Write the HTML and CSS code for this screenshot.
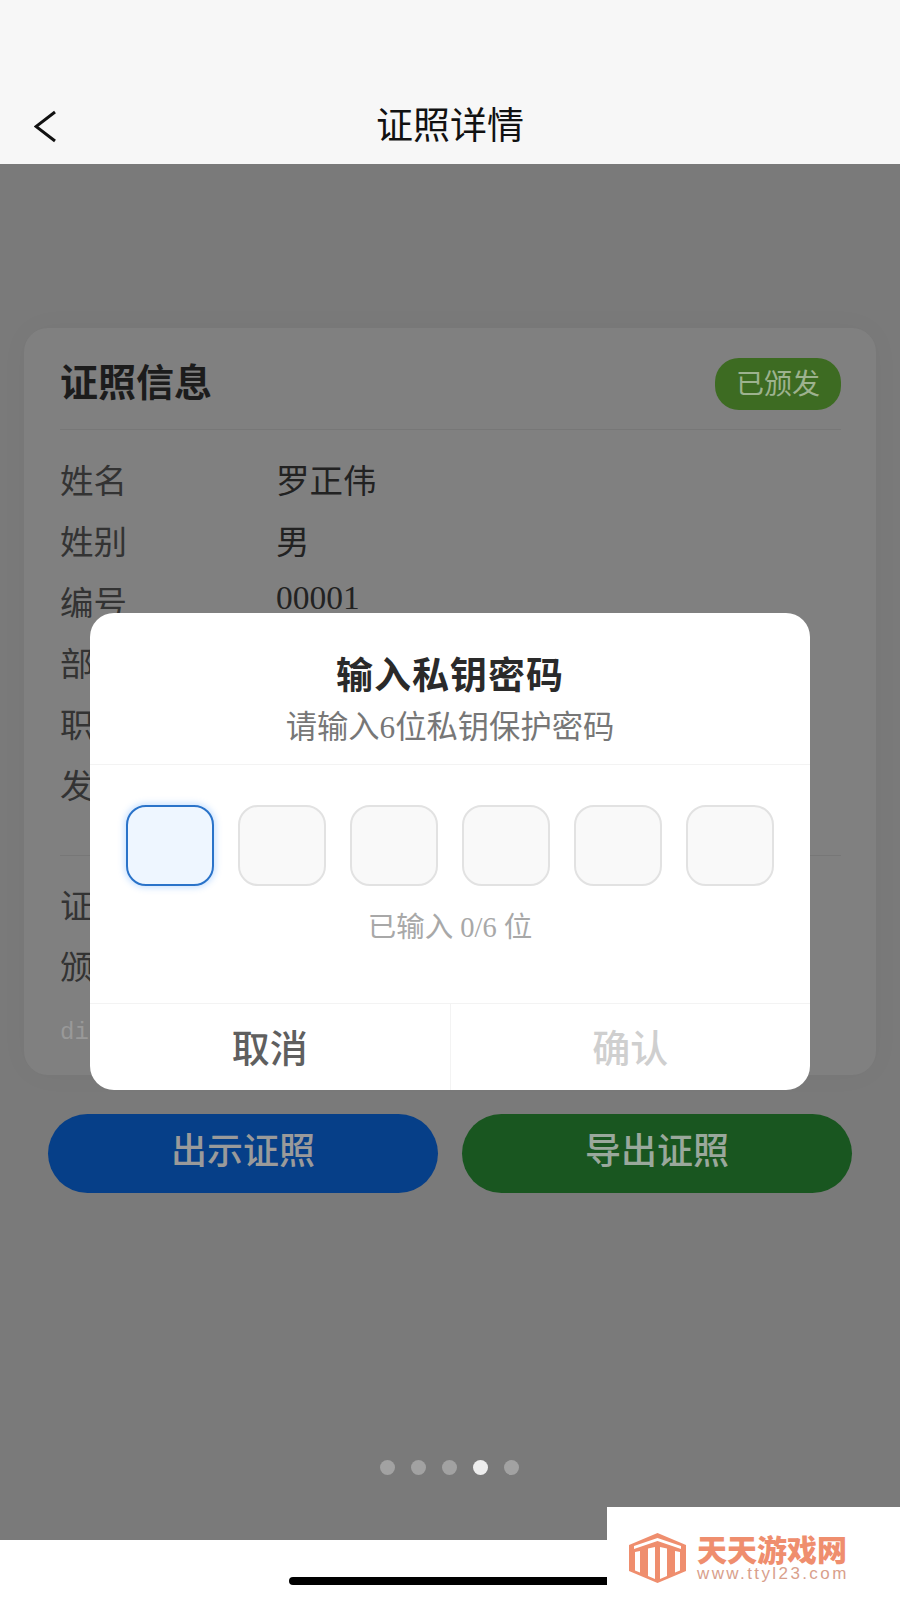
FILE: index.html
```html
<!DOCTYPE html>
<html lang="zh-CN">
<head>
    <meta charset="UTF-8">
    <meta name="viewport" content="width=device-width, initial-scale=1.0">
    <title>证照详情</title>
    <link rel="stylesheet" href="styles.css">
</head>
<body>
    <div class="app">
        <header class="nav-bar">
            <button class="back-btn" aria-label="返回">
                <svg width="24" height="34" viewBox="0 0 24 34">
                    <path d="M21 2 L2 16.5 L21 31" fill="none" stroke="#111" stroke-width="3"/>
                </svg>
            </button>
            <h1 class="nav-title">证照详情</h1>
        </header>

        <main class="page">
            <section class="cert-card">
                <div class="cert-head">
                    <h2 class="cert-title">证照信息</h2>
                    <span class="cert-badge">已颁发</span>
                </div>
                <div class="cert-rows cert-rows-main">
                    <div class="cert-row"><span class="cert-label">姓名</span><span class="cert-value">罗正伟</span></div>
                    <div class="cert-row"><span class="cert-label">姓别</span><span class="cert-value">男</span></div>
                    <div class="cert-row"><span class="cert-label">编号</span><span class="cert-value cert-num">00001</span></div>
                    <div class="cert-row"><span class="cert-label">部门</span></div>
                    <div class="cert-row"><span class="cert-label">职务</span></div>
                    <div class="cert-row"><span class="cert-label">发证</span></div>
                </div>
                <div class="cert-rows">
                    <div class="cert-row"><span class="cert-label">证照</span></div>
                    <div class="cert-row"><span class="cert-label">颁发</span></div>
                    <div class="cert-row cert-did">did</div>
                </div>
            </section>

            <div class="action-row">
                <button class="action-btn action-blue">出示证照</button>
                <button class="action-btn action-green">导出证照</button>
            </div>

            <div class="dots">
                <span class="dot"></span>
                <span class="dot"></span>
                <span class="dot"></span>
                <span class="dot dot-active"></span>
                <span class="dot"></span>
            </div>

            <div class="dialog">
                <div class="dialog-head">
                    <h3 class="dialog-title">输入私钥密码</h3>
                    <p class="dialog-sub">请输入6位私钥保护密码</p>
                </div>
                <div class="pin-row">
                    <div class="pin-box pin-focus"></div>
                    <div class="pin-box"></div>
                    <div class="pin-box"></div>
                    <div class="pin-box"></div>
                    <div class="pin-box"></div>
                    <div class="pin-box"></div>
                </div>
                <p class="pin-count">已输入 0/6 位</p>
                <div class="dialog-actions">
                    <button class="dialog-btn dialog-cancel">取消</button>
                    <button class="dialog-btn dialog-confirm">确认</button>
                </div>
            </div>
        </main>

        <footer class="home-area">
            <span class="home-bar"></span>
        </footer>

        <div class="watermark">
            <svg class="wm-logo" width="57" height="50" viewBox="0 0 57 50">
                <polygon points="28.5,0 57,12 57,38 28.5,50 0,38 0,12" fill="#ef8e6e"/>
                <polygon points="5,13 28.5,5 52,13 52,16 28.5,8 5,16" fill="#fff"/>
                <polygon points="6,19 11,18 11,39.500 6,37.500" fill="#fff"/>
                <polygon points="19,15.500 26,14 26,46 19,43" fill="#fff"/>
                <polygon points="31,14 38,15.500 38,43 31,46" fill="#fff"/>
                <polygon points="46,18 51,19 51,37.500 46,39.500" fill="#fff"/>
            </svg>
            <div class="wm-text">
                <div class="wm-name">天天游戏网</div>
                <div class="wm-url">www.ttyl23.com</div>
            </div>
        </div>
    </div>
</body>
</html>
```

FILE: styles.css
```css
* {
    box-sizing: border-box;
    margin: 0;
    padding: 0;
    font-family: 'Liberation Serif', 'Noto Sans CJK SC', sans-serif;
}

body {
    background-color: #fff;
}

button {
    border: none;
    background: none;
}

.app {
    position: relative;
    width: 900px;
    height: 1600px;
    overflow: hidden;
    display: flex;
    flex-direction: column;
}

.nav-bar {
    position: relative;
    height: 164px;
    background-color: #f7f7f7;
    padding-top: 105px;
    display: flex;
    justify-content: center;
}

.nav-title {
    font-size: 37px;
    font-weight: 400;
    line-height: 44px;
    color: #111;
}

.back-btn {
    position: absolute;
    left: 34px;
    top: 110px;
    display: flex;
}

.page {
    position: relative;
    flex: 1;
    background-color: #7a7a7a;
    padding: 164px 24px 65px;
    display: flex;
    flex-direction: column;
}

.cert-card {
    height: 747px;
    background-color: #808080;
    border-radius: 24px;
    padding: 30px 35px 0 36px;
    box-shadow: 0 0 30px rgba(0,0,0,0.03);
}

.cert-head {
    display: flex;
    justify-content: space-between;
    align-items: center;
    padding-bottom: 19px;
    border-bottom: 1px solid #777;
}

.cert-title {
    font-size: 38px;
    font-weight: 700;
    line-height: 46px;
    padding-bottom: 2px;
    color: #1c1c1c;
}

.cert-badge {
    width: 126px;
    height: 52px;
    border-radius: 24px;
    background-color: #3d6b22;
    color: #9db28f;
    font-size: 28px;
    line-height: 54px;
    text-align: center;
}

.cert-rows {
    padding-top: 17px;
}

.cert-rows-main {
    padding-top: 18px;
    padding-bottom: 41px;
    border-bottom: 1px solid #777;
}

.cert-row {
    display: flex;
    align-items: center;
    height: 61px;
}

.cert-label {
    width: 216px;
    font-size: 33.500px;
    color: #333;
}

.cert-value {
    font-size: 33.500px;
    color: #222;
}

.cert-num {
    padding-bottom: 6px;
}

.cert-did {
    margin-top: 7px;
    font-family: 'Liberation Mono', monospace;
    font-size: 24px;
    color: #999;
}

.action-row {
    display: flex;
    gap: 24px;
    margin: 39px 24px 0;
}

.action-btn {
    flex: 1;
    height: 79px;
    border-radius: 40px;
    font-size: 36px;
    font-weight: 500;
    color: #9a9a9a;
    padding-bottom: 12px;
}

.action-blue {
    background-color: #063f88;
}

.action-green {
    background-color: #195620;
    color: #9aa89c;
}

.dots {
    margin-top: auto;
    margin-right: 2px;
    display: flex;
    justify-content: center;
    gap: 16px;
}

.dot {
    width: 15px;
    height: 15px;
    border-radius: 50%;
    background-color: #a2a2a2;
}

.dot-active {
    background-color: #ededed;
}

.dialog {
    position: absolute;
    left: 90px;
    top: 449px;
    width: 720px;
    height: 477px;
    background-color: #fff;
    border-radius: 24px;
    overflow: hidden;
    display: flex;
    flex-direction: column;
}

.dialog-head {
    padding: 41px 0 18px;
    border-bottom: 1px solid #f3f3f3;
    text-align: center;
}

.dialog-title {
    font-size: 37px;
    letter-spacing: 1px;
    font-weight: 700;
    line-height: 46px;
    color: #2a2a2a;
}

.dialog-sub {
    margin-top: 10px;
    font-size: 31.300px;
    line-height: 36px;
    color: #777;
}

.pin-row {
    display: flex;
    gap: 24px;
    padding: 40px 36px 0;
}

.pin-box {
    width: 88px;
    height: 81px;
    border: 2px solid #e2e2e2;
    border-radius: 20px;
    background-color: #f9f9f9;
}

.pin-focus {
    border-color: #2a73c9;
    background-color: #eef6ff;
    box-shadow: 0 0 6px 2px rgba(64,150,255,0.28);
}

.pin-count {
    margin-top: 25px;
    font-size: 28.500px;
    line-height: 34px;
    text-align: center;
    color: #a8a8a8;
}

.dialog-actions {
    margin-top: auto;
    height: 87px;
    display: flex;
    border-top: 1px solid #f3f3f3;
}

.dialog-btn {
    flex: 1;
    font-size: 38px;
    font-weight: 500;
    padding-bottom: 4px;
}

.dialog-cancel {
    color: #5f5f5f;
    border-right: 1px solid #f3f3f3;
}

.dialog-confirm {
    color: #cfcfcf;
}

.home-area {
    height: 60px;
    background-color: #fff;
    padding: 37px 0 0 289px;
}

.home-bar {
    display: block;
    width: 340px;
    height: 8px;
    border-radius: 4px;
    background-color: #000;
}

/* site stamp in the corner */
.watermark {
    position: absolute;
    left: 607px;
    top: 1507px;
    width: 293px;
    height: 93px;
    background-color: #fff;
    padding: 26px 0 0 22px;
    display: flex;
    gap: 11px;
}

.wm-name {
    font-family: 'Noto Sans CJK SC', sans-serif;
    font-size: 30px;
    font-weight: 900;
    line-height: 30px;
    color: #ef8e6e;
}

.wm-url {
    font-family: 'Liberation Sans', sans-serif;
    font-size: 17px;
    letter-spacing: 2.400px;
    line-height: 18px;
    margin-top: 2px;
    color: #d9a08c;
}
```
